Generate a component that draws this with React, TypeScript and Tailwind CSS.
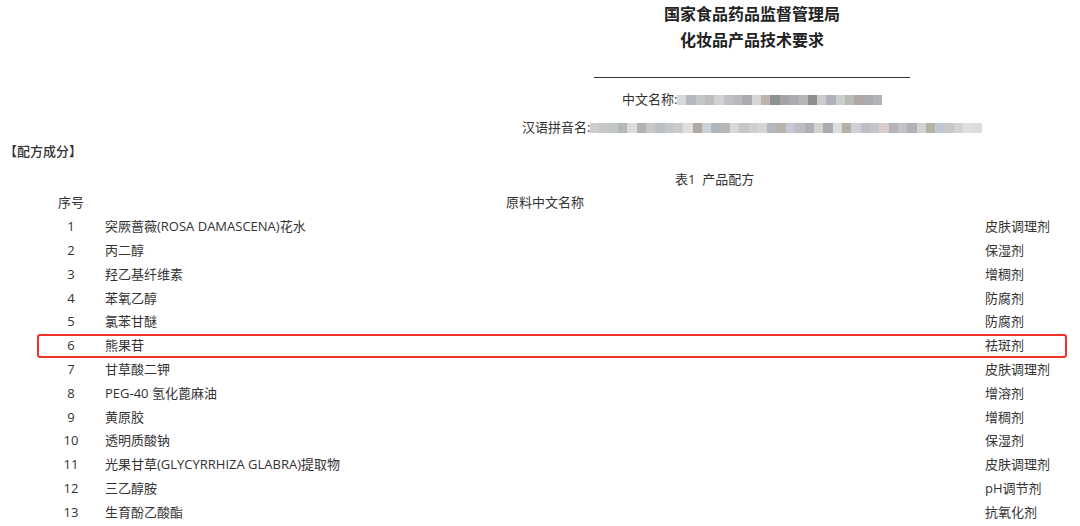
const rows: [string, string, string][] = [
  ["1", "突厥蔷薇(ROSA DAMASCENA)花水", "皮肤调理剂"],
  ["2", "丙二醇", "保湿剂"],
  ["3", "羟乙基纤维素", "增稠剂"],
  ["4", "苯氧乙醇", "防腐剂"],
  ["5", "氯苯甘醚", "防腐剂"],
  ["6", "熊果苷", "祛斑剂"],
  ["7", "甘草酸二钾", "皮肤调理剂"],
  ["8", "PEG-40 氢化蓖麻油", "增溶剂"],
  ["9", "黄原胶", "增稠剂"],
  ["10", "透明质酸钠", "保湿剂"],
  ["11", "光果甘草(GLYCYRRHIZA GLABRA)提取物", "皮肤调理剂"],
  ["12", "三乙醇胺", "pH调节剂"],
  ["13", "生育酚乙酸酯", "抗氧化剂"],
];

// pixelated redaction blocks
const blurA = [
  "#d9d9dc", "#b4b8c0", "#c5c6c8", "#bcbdbd", "#d2d2d2", "#c0c1c4", "#b8b9ba", "#a9abae",
  "#d5d5d5", "#bfb3b0", "#8e9192", "#a3a3a5", "#adabaf", "#b3b6b3", "#8e8e90", "#c8cccc",
  "#b4b0b9", "#ccd0cc", "#b8bbb8", "#b1a8a6", "#a9abae", "#b0b3b3",
];
const blurB = [
  "#cfcfcf", "#c9c6c4", "#c0c6c5", "#b4b8b6", "#dcdcdc", "#b7b2b1", "#c6c8cc", "#bbbfc3",
  "#c2c7ca", "#c9cbcc", "#dedede", "#b2aaa5", "#ccd2d5", "#b1b5bd", "#b6b8ba", "#d8d8d8",
  "#c6c8cc", "#cdd1d3", "#d6d6d2", "#b3b8bd", "#bbb4ab", "#c6c8d6", "#b8bec2", "#aeb0b4",
  "#d5d3cf", "#a8acb2", "#dcdcdc", "#b7b0a6", "#cdd0d6", "#bcbfc5", "#c4c4c8", "#d8cccc",
  "#b4b4bc", "#c3c3c7", "#aeb2b6", "#d2d2d2", "#b6b4a4", "#c0c8d0", "#c8c8c8", "#d0d4d8",
  "#e0e0e0", "#dcdcdc",
];

function Mosaic({ colors }: { colors: string[] }) {
  return (
    <div className="flex h-[10px] items-stretch">
      {colors.map((c, i) => (
        <div
          key={i}
          className={i % 3 === 1 ? "w-[10px] shrink-0" : "w-[9px] shrink-0"}
          style={{ backgroundColor: c }}
        />
      ))}
    </div>
  );
}

export default function App() {
  return (
    <div className="h-[526px] w-[1080px] overflow-hidden bg-white text-[13px] text-[#333] [font-family:'Open_Sans','Noto_Sans_CJK_SC',sans-serif]">
      <div className="ml-[594px] w-[316px] text-center text-[16px] font-bold leading-[26px] text-[#222] [font-family:'Noto_Sans_CJK_SC',serif]">
        <div>国家食品药品监督管理局</div>
        <div>化妆品产品技术要求</div>
      </div>
      <div className="ml-[594px] mt-[25px] w-[316px] border-t border-[#333]" />

      <div className="mt-[10px] flex h-[24px] items-center pl-[622px]">
        <span>中文名称:</span>
        <Mosaic colors={blurA} />
      </div>
      <div className="mt-[4px] flex h-[24px] items-center pl-[522px]">
        <span>汉语拼音名:</span>
        <Mosaic colors={blurB} />
      </div>
      <div className="flex h-[24px] items-center pl-[4px] font-medium">【配方成分】</div>
      <div className="mt-[4px] flex h-[23px] items-center pl-[675px]">表1&nbsp;&nbsp;产品配方</div>

      <div className="ml-[37px] w-[1030px]">
        <div className="grid h-[24px] grid-cols-[64px_1fr_80px] items-center border-2 border-transparent">
          <div className="text-center">序号</div>
          <div className="pl-[2px] text-center">原料中文名称</div>
          <div />
        </div>
        {rows.map(([no, name, fn]) => (
          <div
            key={no}
            className={
              no === "6"
                ? "grid h-[23.8px] grid-cols-[64px_1fr_80px] items-center rounded-[3px] border-2 border-[#f0302a]"
                : "grid h-[23.8px] grid-cols-[64px_1fr_80px] items-center border-2 border-transparent"
            }
          >
            <div className="text-center">{no}</div>
            <div className="pl-[2px]">{name}</div>
            <div>{fn}</div>
          </div>
        ))}
      </div>
    </div>
  );
}
